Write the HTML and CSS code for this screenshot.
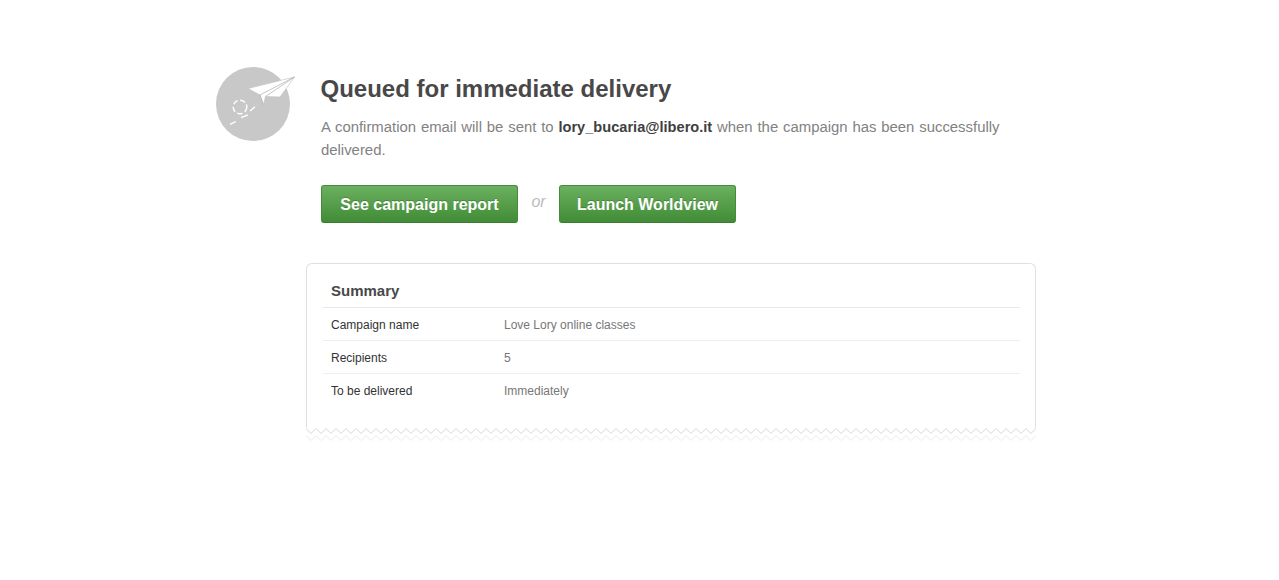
FILE: index.html
```html
<!DOCTYPE html>
<html lang="en">
<head>
<meta charset="utf-8">
<title>Queued for immediate delivery</title>
<link rel="stylesheet" href="styles.css">
</head>
<body>
<main class="page">
  <section class="hero">
    <svg class="plane-icon" width="80" height="76" viewBox="0 0 80 76" aria-hidden="true">
      <circle cx="37" cy="37" r="37" fill="#c8c8c8"/>
      <path d="M32 21.5 L78.5 10 L64 30 L49.5 29.5 L47.5 38 L44 28 Z" fill="#fff" stroke="#c6c6c6" stroke-width=".7" stroke-linejoin="round"/>
      <path d="M44 28 L78.5 10 L49.5 29.5 M44 28 L47.5 38" fill="none" stroke="#b8b8b8" stroke-width=".8"/>
      <circle cx="24" cy="40" r="6.8" fill="none" stroke="#fff" stroke-width="1.4" stroke-dasharray="5.5 2.5"/>
      <path d="M39 39.7 L34 44 M31.7 48 L25 50.7 M19.7 54.7 L14 57.3" fill="none" stroke="#fff" stroke-width="1.4"/>
    </svg>
    <div class="hero-body">
      <h1 class="title">Queued for immediate delivery</h1>
      <p class="lead">A confirmation email will be sent to <strong class="email">lory_bucaria@libero.it</strong> when the campaign has been successfully delivered.</p>
      <div class="actions">
        <a class="btn btn-wide" href="#">See campaign report</a>
        <span class="or">or</span>
        <a class="btn" href="#">Launch Worldview</a>
      </div>
    </div>
  </section>
  <section class="summary">
    <div class="summary-body">
      <h2 class="summary-title">Summary</h2>
      <div class="row"><span class="label">Campaign name</span><span class="value">Love Lory online classes</span></div>
      <div class="row"><span class="label">Recipients</span><span class="value">5</span></div>
      <div class="row"><span class="label">To be delivered</span><span class="value">Immediately</span></div>
    </div>
    <svg class="zigzag" width="730" height="13" viewBox="0 0 730 13" aria-hidden="true">
      <defs>
        <path id="zig-run" d="M0 .5 l5 5 5-5 5 5 5-5 5 5 5-5 5 5 5-5 5 5 5-5 5 5 5-5 5 5 5-5 5 5 5-5 5 5 5-5 5 5 5-5 5 5 5-5 5 5 5-5 5 5 5-5 5 5 5-5 5 5 5-5 5 5 5-5 5 5 5-5 5 5 5-5 5 5 5-5 5 5 5-5 5 5 5-5 5 5 5-5"/>
      </defs>
      <g class="zig-a">
        <use href="#zig-run"/>
        <use href="#zig-run" x="220"/>
        <use href="#zig-run" x="440"/>
        <use href="#zig-run" x="660"/>
      </g>
      <g class="zig-b">
        <use href="#zig-run" y="7"/>
        <use href="#zig-run" x="220" y="7"/>
        <use href="#zig-run" x="440" y="7"/>
        <use href="#zig-run" x="660" y="7"/>
      </g>
    </svg>
  </section>
</main>
</body>
</html>
```
FILE: styles.css
```css
* { box-sizing: border-box; }
body {
  margin: 0;
  background: #fff;
  font-family: "Liberation Sans", Arial, sans-serif;
  color: #7a7a7a;
}
.page { width: 820px; margin-left: 216px; padding-top: 67px; }
.hero { display: flex; align-items: flex-start; }
.plane-icon { flex: none; margin-right: 25px; }
.hero-body { width: 690px; }
.title {
  margin: 6px 0 0 -0.5px;
  font-size: 24px;
  line-height: 32px;
  font-weight: bold;
  color: #484848;
}
.lead {
  margin: 11px 0 0;
  font-size: 14.9px;
  word-spacing: .7px;
  line-height: 23px;
  color: #828282;
}
.email { font-size: 14.6px; word-spacing: 0; color: #3f3f3f; }
.actions { display: flex; align-items: center; margin-top: 23px; }
.btn {
  display: block;
  width: 177px;
  height: 38px;
  line-height: 38px;
  text-align: center;
  font-size: 16px;
  font-weight: bold;
  color: #fff;
  text-decoration: none;
  border: 1px solid #468a3b;
  border-bottom-color: #3b7a30;
  border-radius: 3px;
  background: linear-gradient(#6bb05f, #418c36);
  text-shadow: 0 -1px 0 rgba(0, 0, 0, .2);
}
.btn-wide { width: 197px; }
.or {
  width: 41px;
  text-align: center;
  font-size: 16px;
  font-style: italic;
  color: #bbb;
  position: relative;
  top: -2px;
}
.summary { width: 730px; margin: 40px 0 0 90px; }
.summary-body {
  height: 165px;
  padding: 16px 15px 0 16px;
  border: 1px solid #e0e0e0;
  border-bottom: 0;
  border-radius: 6px 6px 0 0;
}
.summary-title {
  margin: 0;
  padding: 0 8px;
  height: 28px;
  font-size: 15px;
  line-height: 22px;
  font-weight: bold;
  color: #484848;
  border-bottom: 1px solid #e9e9e9;
}
.row {
  display: flex;
  height: 33px;
  padding: 0 8px;
  line-height: 34px;
  font-size: 12px;
  border-bottom: 1px solid #eee;
}
.row:last-child { border-bottom-color: transparent; }
.label { width: 173px; color: #333; }
.value { color: #777; }
.zigzag { display: block; }
.zig-a, .zig-b { fill: none; }
.zig-a { stroke: #d6d6d6; }
.zig-b { stroke: #e9e9e9; }
```
